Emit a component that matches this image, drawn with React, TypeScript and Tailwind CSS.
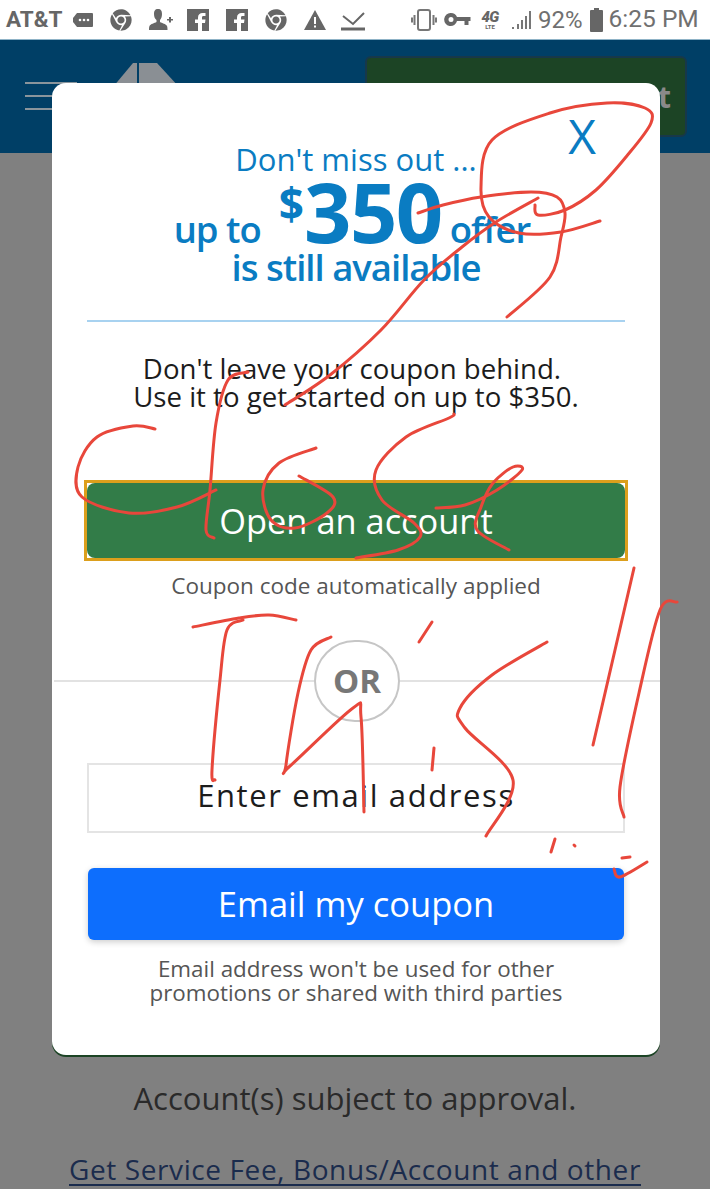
import { FaChrome } from 'react-icons/fa';

type Point = [number, number];

// hand-drawn red scribbles, in page coordinates
const SCRIBBLES: Point[][] = [
  [[418, 213], [443, 205], [481, 197], [531, 192], [557, 197], [565, 213], [561, 237], [550, 277], [507, 317]],
  [[600, 221], [561, 232], [519, 233], [489, 217], [481, 187], [492, 140], [550, 113], [607, 103], [645, 108], [651, 123], [626, 157], [596, 190], [565, 210], [538, 215], [535, 205]],
  [[538, 198], [496, 222], [462, 247], [424, 280], [381, 330], [330, 375], [285, 405]],
  [[155, 429], [133, 426], [97, 437], [78, 467], [82, 497], [129, 513], [177, 507], [216, 490]],
  [[248, 372], [228, 380], [216, 423], [210, 490], [206, 530], [214, 538]],
  [[316, 448], [279, 463], [263, 490], [271, 520], [295, 528], [327, 513], [333, 497], [299, 476]],
  [[454, 414], [449, 418], [406, 437], [376, 470], [382, 500], [414, 523], [420, 537], [398, 550], [356, 558]],
  [[436, 508], [465, 505], [497, 490], [522, 470], [513, 467], [493, 483], [481, 507], [477, 530], [509, 550]],
  [[193, 627], [239, 618], [269, 615], [296, 620]],
  [[243, 620], [227, 630], [220, 680], [212, 770], [215, 780]],
  [[331, 637], [311, 650], [298, 693], [286, 765], [290, 766], [353, 708], [361, 717], [364, 812]],
  [[432, 622], [419, 642]],
  [[434, 748], [432, 770]],
  [[547, 642], [492, 675], [460, 708], [465, 728], [513, 780], [486, 836]],
  [[634, 568], [593, 745]],
  [[677, 602], [660, 610], [639, 693], [620, 787], [624, 817]],
  [[555, 839], [551, 852]],
  [[574, 845], [575, 846]],
  [[622, 858], [630, 857]],
  [[647, 862], [620, 877], [614, 869]],
];

function toPath(points: Point[]) {
  let d = `M${points[0][0]} ${points[0][1]}`;
  for (let i = 0; i < points.length - 1; i++) {
    const p0 = points[Math.max(i - 1, 0)];
    const p1 = points[i];
    const p2 = points[i + 1];
    const p3 = points[Math.min(i + 2, points.length - 1)];
    d += ` C${p1[0] + (p2[0] - p0[0]) / 6} ${p1[1] + (p2[1] - p0[1]) / 6} ${p2[0] - (p3[0] - p1[0]) / 6} ${p2[1] - (p3[1] - p1[1]) / 6} ${p2[0]} ${p2[1]}`;
  }
  return d;
}

function FacebookIcon({ className }: { className: string }) {
  return (
    <svg width="22" height="22" viewBox="0 0 22 22" className={className}>
      <path
        fill="#666"
        fillRule="evenodd"
        d="M0 0h22v22H15v-8h3l.5-3.500H15V8.500c0-1 .5-1.500 1.500-1.500h2V4h-3C13 4 11 5.500 11 8.500v2H8V14h3v8H0z"
      />
    </svg>
  );
}

function StatusBar() {
  return (
    <div className="h-[39px] flex items-center bg-white text-[#666] font-['Roboto',sans-serif] pl-[6px]">
      <span className="w-[56px] text-[22.500px] font-bold">AT&amp;T</span>
      <svg width="22" height="18" viewBox="0 0 22 18" className="ml-[10px]" fill="#666">
        <path d="M5 2h15a1 1 0 0 1 1 1v12a1 1 0 0 1-1 1H5l-4-5V7z" />
        <circle cx="8" cy="9" r="1.300" fill="#fff" />
        <circle cx="12" cy="9" r="1.300" fill="#fff" />
        <circle cx="16" cy="9" r="1.300" fill="#fff" />
      </svg>
      <FaChrome className="ml-[16px] text-[22px]" />
      <svg width="26" height="24" viewBox="0 0 26 24" className="ml-[16px]" fill="#666">
        <path d="M10 1c3 0 4 2 4 5 0 3-1 5-2 6v2c2 1 6 2 7 4 .5 1 .5 3 .5 4H1c0-1 0-3 .5-4 1-2 5-3 7-4v-2C7 11 6 9 6 6c0-3 1-5 4-5z" />
        <path d="M21 9h2v2h2v1.500h-2v2h-2v-2h-2V11h2z" />
      </svg>
      <FacebookIcon className="ml-[13px]" />
      <FacebookIcon className="ml-[17px]" />
      <FaChrome className="ml-[17px] text-[22px]" />
      <svg width="24" height="22" viewBox="0 0 24 22" className="ml-[16px]">
        <path d="M12 1l11 20H1z" fill="#666" />
        <path d="M11 8h2v7h-2zM11 16.500h2v2h-2z" fill="#fff" />
      </svg>
      <svg width="24" height="24" viewBox="0 0 24 24" className="ml-[14px]" fill="none" stroke="#666">
        <path d="M2 8l10 8L23 5" strokeWidth="2" />
        <path d="M0 21h24" strokeWidth="3" />
      </svg>

      <svg width="26" height="24" viewBox="0 0 26 24" className="ml-[46px]" fill="none" stroke="#777" strokeWidth="2">
        <rect x="7" y="2" width="12" height="20" rx="2" />
        <path d="M3.500 7v10M1 9.500v5M22.500 7v10M25 9.500v5" />
      </svg>
      <svg width="27" height="14" viewBox="0 0 26 14" className="ml-[7px]" fill="#666">
        <path d="M6.500 0a6.500 6.500 0 0 1 6 4H26v4h-2v4h-4V8h-7.500a6.500 6.500 0 1 1-6-8zm0 4a2.500 2.500 0 1 0 0 5 2.500 2.500 0 0 0 0-5z" />
      </svg>
      <span className="ml-[7px] w-[24px] flex flex-col items-center">
        <span className="text-[15px] leading-[14px] font-black italic tracking-tighter">4G</span>
        <span className="text-[6px] leading-[6px] font-bold">LTE</span>
      </span>
      <svg width="22" height="20" viewBox="0 0 22 20" className="ml-[9px]" fill="#777">
        <path d="M1 17h2v2H1zM6 14h2v5H6zM10 10h2v9h-2zM14 6h2v13h-2zM18 1h2v18h-2z" />
      </svg>
      <span className="ml-[5px] text-[24px] text-[#707070]">92%</span>
      <svg width="13" height="24" viewBox="0 0 13 24" className="ml-[7px]" fill="#666">
        <path d="M4 0h5v2h3a1 1 0 0 1 1 1v20a1 1 0 0 1-1 1H1a1 1 0 0 1-1-1V3a1 1 0 0 1 1-1h3z" />
      </svg>
      <span className="ml-[6px] text-[24.500px] text-[#707070] whitespace-nowrap">6:25 PM</span>
    </div>
  );
}

function PageBehind() {
  return (
    <div className="font-['Open_Sans',sans-serif]">
      <div className="h-[114px] bg-[#003f66] border-t border-[#8fb3c7] flex items-start">
        <div className="ml-[25px] mt-[42px] w-[52px] flex flex-col gap-[11px]">
          <div className="h-[2px] bg-[#8a959c]" />
          <div className="h-[2px] bg-[#8a959c]" />
          <div className="h-[2px] bg-[#8a959c]" />
        </div>
        <svg width="72" height="24" viewBox="0 0 72 24" className="ml-[36px] mt-[23px]">
          <path d="M20 0h4v24H0z" fill="#8a8f94" />
          <path d="M26 0h18l22 24H26z" fill="#8a8f94" />
        </svg>
        <div className="ml-[180px] mt-[16px] w-[322px] h-[81px] rounded-[6px] bg-[#1c4425] border-2 border-[#17384a] flex items-center justify-end pr-[14px] text-[30px] font-bold text-[#8a8a8a] whitespace-nowrap">
          Open an account
        </div>
      </div>
      <div className="pt-[925px] flex flex-col items-center">
        <p className="text-[31px] leading-[40px] text-[#2a2a2a] whitespace-nowrap">Account(s) subject to approval.</p>
        <a className="mt-[36px] text-[28px] leading-[30px] tracking-[0.6px] text-[#1b2c4d] border-b-2 border-[#1b2c4d] whitespace-nowrap">
          Get Service Fee, Bonus/Account and other
        </a>
      </div>
    </div>
  );
}

function CouponModal() {
  return (
    <div className="absolute left-[52px] top-[83px] w-[608px] h-[972px] bg-white rounded-[14px] shadow-[0_2px_0_#1c4425] font-['Open_Sans',sans-serif] flex flex-col items-center">
      <span className="absolute right-[64px] top-[28px] text-[48px] leading-[50px] text-[#0a7cc2]">X</span>

      <p className="mt-[58px] text-[31px] leading-[36px] text-[#0a7cc2] whitespace-nowrap">Don't miss out ...</p>

      <div className="mt-[1px] mr-[8px] flex items-baseline justify-center text-[#0a7cc2] font-semibold whitespace-nowrap">
        <span className="text-[36.500px] leading-[36px] tracking-[-1px]">up to</span>
        <span className="ml-[18px] mt-[4px] self-start text-[44px] leading-[42px] font-bold">$</span>
        <span className="text-[83px] leading-[66px] font-bold tracking-[-1.500px]">350</span>
        <span className="ml-[8px] text-[36.500px] leading-[36px] tracking-[-1px]">offer</span>
      </div>
      <p className="text-[36.500px] leading-[40px] tracking-[-1px] font-semibold text-[#0a7cc2] whitespace-nowrap">is still available</p>

      <div className="mt-[33px] w-[538px] h-[2px] shrink-0 bg-[#a8d2f0]" />

      <p className="mt-[32px] text-[27.600px] leading-[28px] text-[#1c1c1c] text-center whitespace-nowrap">
        <span className="pr-[8px]">Don't leave your coupon behind.</span>
        <br />
        Use it to get started on up to $350.
      </p>

      <button className="mt-[70px] w-[544px] h-[81px] shrink-0 border-[3px] border-[#dc9f1c] bg-white">
        <span className="flex items-center justify-center h-full rounded-[8px] bg-[#327c48] text-[34.400px] text-white">Open an account</span>
      </button>

      <p className="mt-[10px] text-[22.500px] leading-[30px] text-[#555]">Coupon code automatically applied</p>

      <div className="mt-[39px] w-full flex items-center shrink-0">
        <div className="h-[2px] flex-1 ml-[2px] bg-[#e2e2e2]" />
        <div className="w-[86px] h-[82px] shrink-0 rounded-full border-2 border-[#c6c6c6] flex items-center justify-center text-[33px] font-bold text-[#777]">OR</div>
        <div className="h-[2px] flex-1 bg-[#e2e2e2]" />
      </div>

      <div className="mt-[41px] w-[538px] h-[70px] shrink-0 border-2 border-[#e4e4e4] flex items-center justify-center pb-[6px] text-[31px] tracking-[1.600px] text-[#1c1c1c]">
        Enter email address
      </div>

      <button className="mt-[35px] w-[536px] h-[72px] shrink-0 rounded-[6px] bg-[#0d6efd] text-[34.500px] text-white shadow-[0_2px_6px_rgba(0,0,0,0.2)]">
        Email my coupon
      </button>

      <p className="mt-[17px] text-[22.400px] leading-[24px] text-[#555] text-center whitespace-nowrap">
        Email address won't be used for other
        <br />
        promotions or shared with third parties
      </p>
    </div>
  );
}

export default function App() {
  return (
    <div className="relative w-[710px] h-[1189px] overflow-hidden bg-[#808080]">
      <StatusBar />
      <PageBehind />
      <CouponModal />
      <svg width="710" height="1189" viewBox="0 0 710 1189" className="absolute inset-0" fill="none" stroke="#e8473b" strokeWidth="3" strokeLinecap="round" strokeLinejoin="round">
        {SCRIBBLES.map((points, i) => (
          <path key={i} d={toPath(points)} />
        ))}
      </svg>
    </div>
  );
}
